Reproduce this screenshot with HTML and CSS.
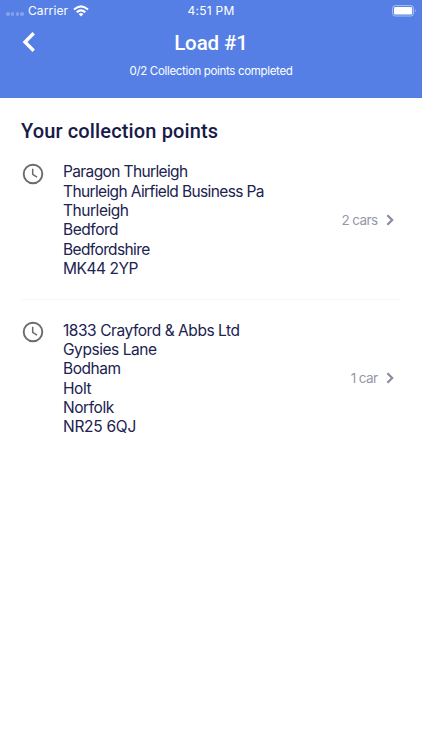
FILE: index.html
```
<!DOCTYPE html>
<html lang="en">
<head>
<meta charset="utf-8">
<title>Load #1</title>
<link rel="stylesheet" href="styles.css">
</head>
<body>
<header class="header">
  <div class="status">
    <div class="carrier">
      <span class="signal"><i></i><i></i><i></i><i></i></span>
      <span class="carrier-name">Carrier</span>
      <svg class="wifi" viewBox="0 0 16 12" width="16" height="12"><g fill="none" stroke="#fff" stroke-width="2"><path d="M1 4.6Q8-1.8 15 4.6"/><path d="M3.7 7.3Q8 3.4 12.3 7.3"/></g><path fill="#fff" d="M5.6 9Q8 7.1 10.4 9L8 11.5z"/></svg>
    </div>
    <span class="time">4:51 PM</span>
    <svg class="battery" viewBox="0 0 26 12" width="26" height="12"><rect x=".6" y=".6" width="21" height="10.4" rx="2.8" fill="none" stroke="#fff" stroke-opacity=".5"/><rect x="2" y="2" width="18.2" height="7.6" rx="1.4" fill="#fff"/><path d="M23.2 4q1.7 1.8 0 3.6z" fill="#fff" fill-opacity=".5"/></svg>
  </div>
  <div class="nav">
    <svg class="back" viewBox="0 0 14 22" width="14" height="22"><path d="M11.7 2.2L3 11l8.7 8.8" fill="none" stroke="#fff" stroke-width="3.4"/></svg>
    <h1 class="title">Load #1</h1>
  </div>
  <p class="progress">0/2 Collection points completed</p>
</header>
<main class="content">
  <h2 class="heading">Your collection points</h2>
  <section class="point">
    <svg class="clock" viewBox="0 0 22 22" width="22" height="22"><g fill="none" stroke="#6b6b6b"><circle cx="11" cy="11" r="9.3" stroke-width="1.9"/><path d="M10.7 5.8v5.6l4.3 2.7" stroke-width="1.5"/></g></svg>
    <address class="address">
      <div class="tight">Paragon Thurleigh</div>
      <div class="tight">Thurleigh Airfield Business Pa</div>
      <div>Thurleigh</div>
      <div>Bedford</div>
      <div class="tight">Bedfordshire</div>
      <div>MK44 2YP</div>
    </address>
    <span class="count">2 cars</span>
    <svg class="chevron" viewBox="0 0 8 12" width="8" height="12"><path d="M1.4 1.2L6.2 6l-4.8 4.8" fill="none" stroke="#8a8a9f" stroke-width="2.2"/></svg>
  </section>
  <section class="point">
    <svg class="clock" viewBox="0 0 22 22" width="22" height="22"><g fill="none" stroke="#6b6b6b"><circle cx="11" cy="11" r="9.3" stroke-width="1.9"/><path d="M10.7 5.8v5.6l4.3 2.7" stroke-width="1.5"/></g></svg>
    <address class="address">
      <div>1833 Crayford &amp; Abbs Ltd</div>
      <div>Gypsies Lane</div>
      <div>Bodham</div>
      <div>Holt</div>
      <div>Norfolk</div>
      <div class="loose">NR25 6QJ</div>
    </address>
    <span class="count">1 car</span>
    <svg class="chevron" viewBox="0 0 8 12" width="8" height="12"><path d="M1.4 1.2L6.2 6l-4.8 4.8" fill="none" stroke="#8a8a9f" stroke-width="2.2"/></svg>
  </section>
</main>
</body>
</html>
```
FILE: styles.css
```
* { box-sizing: border-box; }
body { margin: 0; min-height: 750px; background: #fff; color: #20224f; font-family: Inter, "Liberation Sans", sans-serif; }
.header { height: 98px; background: #557fe5; color: #fff; }
.status { display: grid; grid-template-columns: 1fr auto 1fr; align-items: center; height: 22px; padding: 0 4px; font-size: 12px; line-height: 20px; }
.carrier { display: flex; align-items: center; padding-left: 2px; }
.signal { display: flex; gap: 1.3px; margin: 6px 4px 0 0; }
.signal i { width: 3.5px; height: 3.5px; border-radius: 50%; background: rgba(255,255,255,.28); }
.carrier-name { letter-spacing: .15px; }
.wifi { margin-left: 5px; }
.time { letter-spacing: .25px; }
.battery { justify-self: end; margin-top: -1px; }
.nav { display: grid; grid-template-columns: 40px 1fr 40px; align-items: center; height: 40px; }
.back { margin-left: 22px; }
.title { margin: 2px 0 0; text-align: center; font: 500 20.5px/28px Roboto, sans-serif; letter-spacing: -.1px; }
.progress { margin: 0; text-align: center; font-size: 11.5px; line-height: 18px; letter-spacing: -.33px; }
.content { padding: 20px 21px 0; }
.heading { margin: 0; height: 23.4px; color: #171b48; font: 500 20px/26px Roboto, sans-serif; letter-spacing: .14px; }
.point { display: flex; align-items: center; height: 157.7px; padding-right: 7px; }
.point + .point { border-top: 1px solid #f7f7f7; }
.clock { align-self: flex-start; margin: 21.5px 0 0 1px; }
.point + .point .clock { margin-top: 21px; }
.address { flex: 1; margin-left: 19px; padding-top: .5px; font-style: normal; font-size: 15.5px; line-height: 19.35px; letter-spacing: -.45px; white-space: nowrap; }
.tight { letter-spacing: -.62px; }
.loose { letter-spacing: -.28px; }
.count { color: #9797a8; font-size: 13.5px; line-height: 20px; letter-spacing: -.6px; }
.chevron { margin-left: 8.5px; }
```
